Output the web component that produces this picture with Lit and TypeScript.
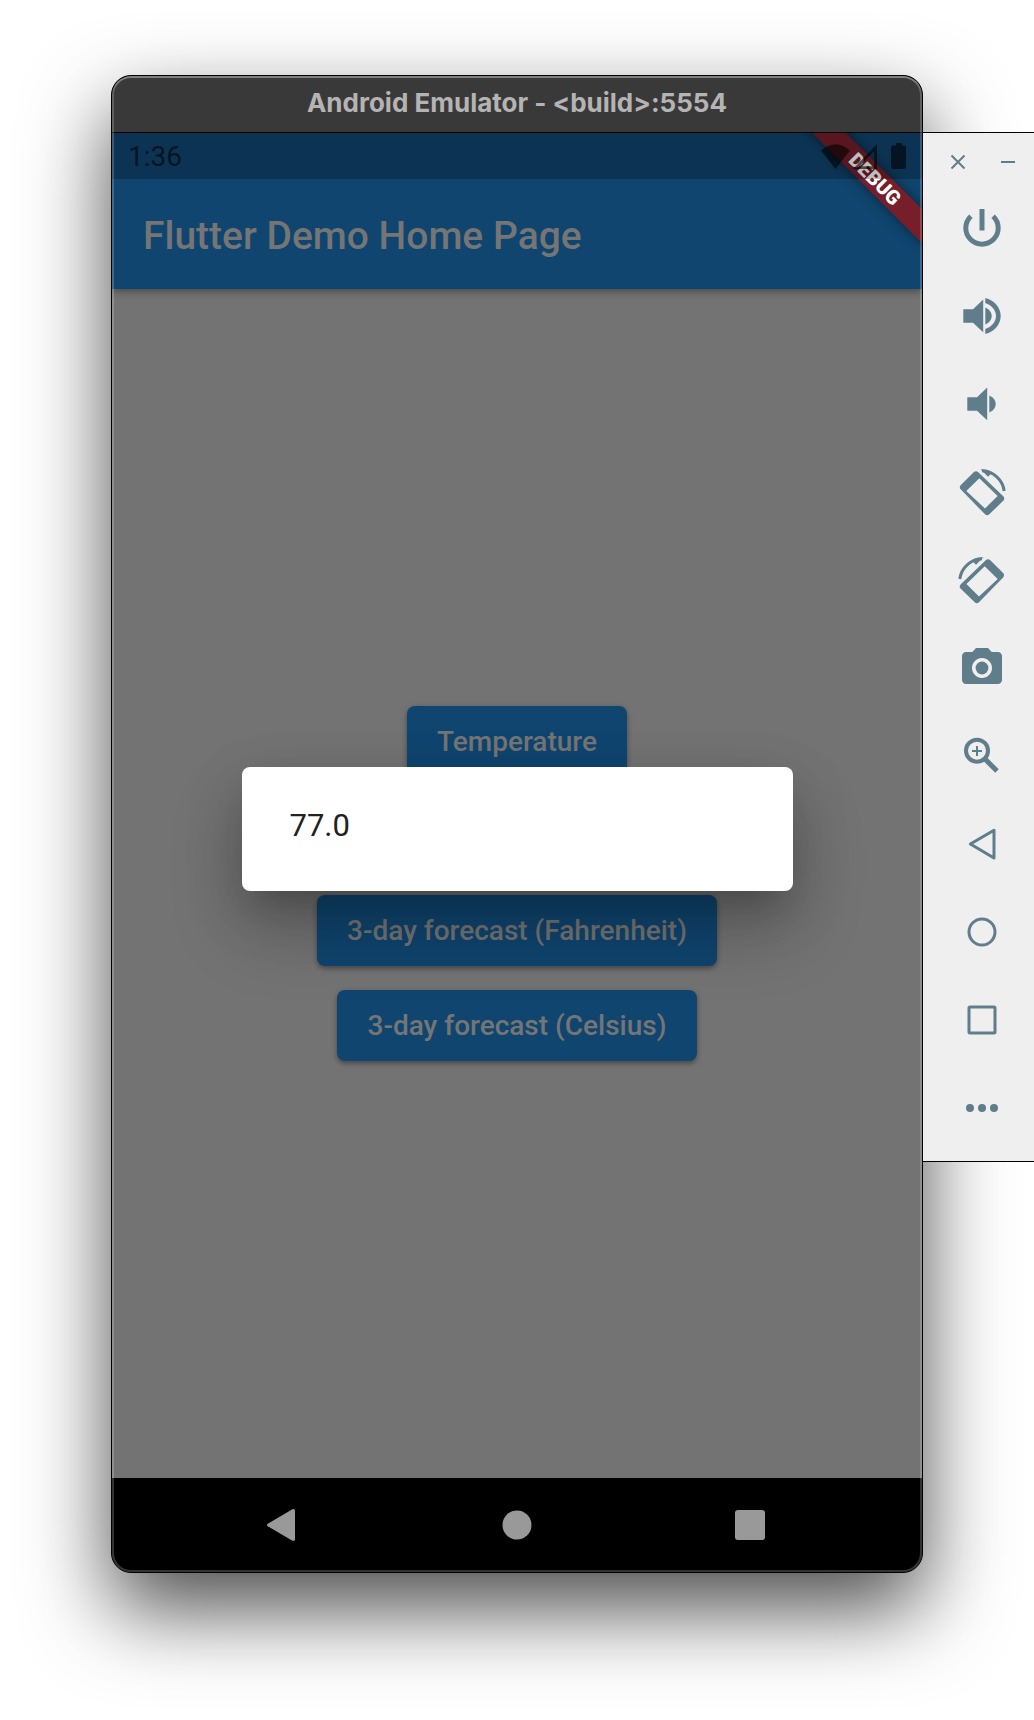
import { LitElement, html, svg, css } from "lit";
import { customElement } from "lit/decorators.js";

const speaker = svg`
  <path d="M5.3 17.3H15L25.2 7.5V40.2L15 30.7H5.3z"/>
  <path d="M27.3 15.5C31 17 33.7 20.3 33.7 24S31 31 27.3 32.5z"/>`;

const rotate = svg`
  <path fill-rule="evenodd" d="M16 4Q18 2.4 20 4L45.5 28.6Q47 30.6 45.5 32.6L31 46.6Q29.3 48 27.3 46.6L2.6 21.2Q1 19.2 2.6 17.2zM21.3 10.2L8.3 22.9L27 40.6L39.6 28z"/>
  <path class="line" stroke-width="3" d="M24 2.8A23.2 23.2 0 0 1 46.2 23"/>
  <path d="M22.5 1.3L30 8.8L34 4.8L30 2z"/>`;

const tools = [
  {
    label: "Power",
    icon: svg`<path class="line" stroke-width="5" d="M12.9 12.2A16.2 16.2 0 1 0 35.1 12.2"/><path d="M21.5 5h5v21.5h-5z"/>`,
  },
  {
    label: "Volume up",
    icon: svg`${speaker}<path d="M27.3 6C36 8 42.7 15.5 42.7 24S36 40 27.3 42V37C33.5 35 38 30 38 24S33.5 13 27.3 11z"/>`,
  },
  { label: "Volume down", icon: svg`<g transform="translate(4 0)">${speaker}</g>` },
  { label: "Rotate left", icon: rotate },
  { label: "Rotate right", icon: svg`<g transform="matrix(-1 0 0 1 48 0)">${rotate}</g>` },
  {
    label: "Take screenshot",
    icon: svg`<g transform="scale(2)"><circle cx="12" cy="12" r="3.2"/><path d="M9 2L7.17 4H4c-1.1 0-2 .9-2 2v12c0 1.1.9 2 2 2h16c1.1 0 2-.9 2-2V6c0-1.1-.9-2-2-2h-3.17L15 2H9zm3 15c-2.76 0-5-2.24-5-5s2.24-5 5-5 5 2.24 5 5-2.24 5-5 5z"/></g>`,
  },
  {
    label: "Zoom",
    icon: svg`<circle class="line" stroke-width="4" cx="19" cy="18.7" r="11"/><path class="line" stroke-width="2" d="M14 19h10M19 14v10"/><path class="line" stroke-width="5" d="M27.5 27.5L39 39"/>`,
  },
  { label: "Back", icon: svg`<path class="line" stroke-width="3" d="M12.4 24L36 10.2V38z"/>` },
  { label: "Home", icon: svg`<circle class="line" stroke-width="3" cx="24" cy="24" r="13"/>` },
  { label: "Overview", icon: svg`<rect class="line" stroke-width="3" x="11" y="11" width="26" height="26" rx="1"/>` },
  { label: "More", icon: svg`<circle cx="12" cy="24" r="4"/><circle cx="24" cy="24" r="4"/><circle cx="36" cy="24" r="4"/>` },
];

@customElement("emulator-toolbar")
class EmulatorToolbar extends LitElement {
  static styles = css`
    :host {
      display: block;
      box-sizing: border-box;
      background: #efefef;
      border: solid #000;
      border-width: 1px 0;
      padding: 7px 0 9px;
    }
    .controls {
      display: flex;
      gap: 6px;
      height: 44px;
      padding-left: 13px;
    }
    .tools {
      display: flex;
      flex-direction: column;
      padding-left: 15px;
    }
    button {
      display: flex;
      align-items: center;
      justify-content: center;
      flex: none;
      border: 0;
      padding: 0;
      background: none;
      color: #607d8b;
    }
    .control {
      width: 44px;
    }
    .tool {
      width: 88px;
      height: 88px;
    }
    svg {
      display: block;
      fill: currentColor;
    }
    .line {
      fill: none;
      stroke: currentColor;
      stroke-linejoin: round;
    }
  `;

  render() {
    return html`
      <div class="controls">
        <button class="control" aria-label="Close">
          <svg width="16" height="16"><path class="line" stroke-width="2" d="M1.5 1.5L14.5 14.5M14.5 1.5L1.5 14.5" /></svg>
        </button>
        <button class="control" aria-label="Minimize">
          <svg width="14" height="2"><path d="M0 0h14v2H0z" /></svg>
        </button>
      </div>
      <div class="tools">
        ${tools.map(
          (t) => html`<button class="tool" aria-label=${t.label}>
            <svg width="48" height="48" viewBox="0 0 48 48">${t.icon}</svg>
          </button>`
        )}
      </div>
    `;
  }
}

@customElement("device-screen")
class DeviceScreen extends LitElement {
  static styles = css`
    :host {
      display: flex;
      flex-direction: column;
      position: relative;
      overflow: hidden;
      background: #737373;
      font-family: Roboto, "Liberation Sans", sans-serif;
    }
    .appbar {
      display: flex;
      align-items: center;
      height: 106px;
      padding: 50px 32px 0 31px;
      background: #10456f;
      color: #757575;
      box-shadow: 0 2px 8px rgba(0, 0, 0, 0.4);
    }
    h1 {
      margin: 0;
      font-size: 39px;
      line-height: 46px;
      font-weight: 500;
    }
    .ribbon {
      position: absolute;
      top: 34px;
      right: -33px;
      width: 160px;
      height: 24px;
      transform: rotate(45deg);
      background: #761f2b;
      box-shadow: 0 0 12px rgba(0, 0, 0, 0.5);
      color: #fff;
      font-size: 20px;
      line-height: 24px;
      font-weight: 900;
      text-align: center;
    }
    .status {
      position: absolute;
      inset: 0 0 auto;
      display: flex;
      align-items: center;
      height: 46px;
      padding: 0 16px;
      background: rgba(0, 0, 0, 0.25);
      color: rgba(0, 0, 0, 0.6);
      font-size: 28px;
      line-height: 32px;
    }
    .time {
      margin-right: auto;
      padding-top: 2px;
    }
    .signal {
      margin: 0 14px 0 3px;
    }
    svg {
      display: block;
      fill: currentColor;
    }
    .body {
      flex: 1;
      display: flex;
      flex-direction: column;
      align-items: center;
      justify-content: center;
      gap: 118px;
    }
    .forecasts {
      display: flex;
      flex-direction: column;
      align-items: center;
      gap: 24px;
    }
    .action {
      border: 0;
      border-radius: 8px;
      height: 71px;
      padding: 0 30px;
      background: #10456f;
      color: #757575;
      font: 500 28px/32px Roboto, "Liberation Sans", sans-serif;
      box-shadow: 0 3px 4px rgba(0, 0, 0, 0.25), 0 1px 6px rgba(0, 0, 0, 0.15);
    }
    .overlay {
      position: absolute;
      inset: 46px 0 94px;
      display: grid;
      place-items: center;
    }
    .dialog {
      box-sizing: border-box;
      width: 551px;
      max-width: 90%;
      padding: 40px 48px 46px;
      border-radius: 8px;
      background: #fff;
      color: #212121;
      font-size: 31px;
      line-height: 38px;
      box-shadow: 0 22px 30px -14px rgba(0, 0, 0, 0.15), 0 38px 70px 4px rgba(0, 0, 0, 0.2), 0 18px 60px 4px rgba(0, 0, 0, 0.1);
    }
    .nav {
      display: flex;
      align-items: center;
      justify-content: center;
      gap: 186px;
      height: 94px;
      background: #000;
      color: #999;
    }
    .key {
      border: 0;
      padding: 0;
      background: none;
      color: inherit;
    }
  `;

  render() {
    return html`
      <header class="appbar"><h1>Flutter Demo Home Page</h1></header>
      <main class="body">
        <button class="action">Temperature</button>
        <div class="forecasts">
          <button class="action">3-day forecast (Fahrenheit)</button>
          <button class="action">3-day forecast (Celsius)</button>
        </div>
      </main>
      <nav class="nav">
        <button class="key" aria-label="Back">
          <svg width="48" height="48"><path d="M8.8 25.2Q7 24 8.8 22.8L33 8.4Q36 7.4 36 10V38Q36 40.6 33 39.6z" /></svg>
        </button>
        <button class="key" aria-label="Home">
          <svg width="48" height="48"><circle cx="24" cy="24" r="14.5" /></svg>
        </button>
        <button class="key" aria-label="Overview">
          <svg width="48" height="48"><rect x="8" y="9" width="30" height="30" rx="3" /></svg>
        </button>
      </nav>
      <div class="ribbon">DEBUG</div>
      <div class="status">
        <span class="time">1:36</span>
        <svg width="29" height="25"><path d="M0 6.5Q14.5-6 29 6.5L14.5 25z" /></svg>
        <svg class="signal" width="24" height="25"><path fill-rule="evenodd" d="M0 25L24 0V25zM6.5 22.2H21.2V7z" /></svg>
        <svg width="15" height="26"><path d="M5 0h6v2.5h2q2 0 2 2V24q0 2-2 2H2q-2 0-2-2V4.500q0-2 2-2h3z" /></svg>
      </div>
      <div class="overlay"><div class="dialog" role="dialog">77.0</div></div>
    `;
  }
}

@customElement("app-root")
class AppRoot extends LitElement {
  static styles = css`
    :host {
      display: block;
      overflow: hidden;
      background: #fff;
    }
    .desktop {
      box-sizing: border-box;
      display: flex;
      align-items: stretch;
      min-height: 100vh;
      padding: 75px 0 147px 111px;
    }
    .window {
      flex: 1;
      position: relative;
      display: flex;
      flex-direction: column;
      overflow: hidden;
      border: 1px solid #000;
      border-radius: 20px;
      background: #000;
      box-shadow: 0 36px 84px rgba(0, 0, 0, 0.7);
    }
    .window::after {
      content: "";
      position: absolute;
      inset: 0;
      border-radius: 19px;
      box-shadow: inset 0 0 0 2px rgba(255, 255, 255, 0.2), inset 0 2px 0 rgba(255, 255, 255, 0.2);
      pointer-events: none;
    }
    .titlebar {
      height: 56px;
      background: #3a3939;
      border-bottom: 1px solid #000;
      color: #b5b4b4;
      font: 700 26px/54px Inter, "Liberation Sans", sans-serif;
      text-align: center;
    }
    .screen {
      flex: 1;
    }
    .toolbar {
      position: relative;
      flex: none;
      width: 111px;
      margin-top: 57px;
      align-self: flex-start;
      overflow: hidden;
    }
  `;

  render() {
    return html`
      <div class="desktop">
        <section class="window">
          <div class="titlebar">Android Emulator - &lt;build&gt;:5554</div>
          <device-screen class="screen"></device-screen>
        </section>
        <emulator-toolbar class="toolbar"></emulator-toolbar>
      </div>
    `;
  }
}
